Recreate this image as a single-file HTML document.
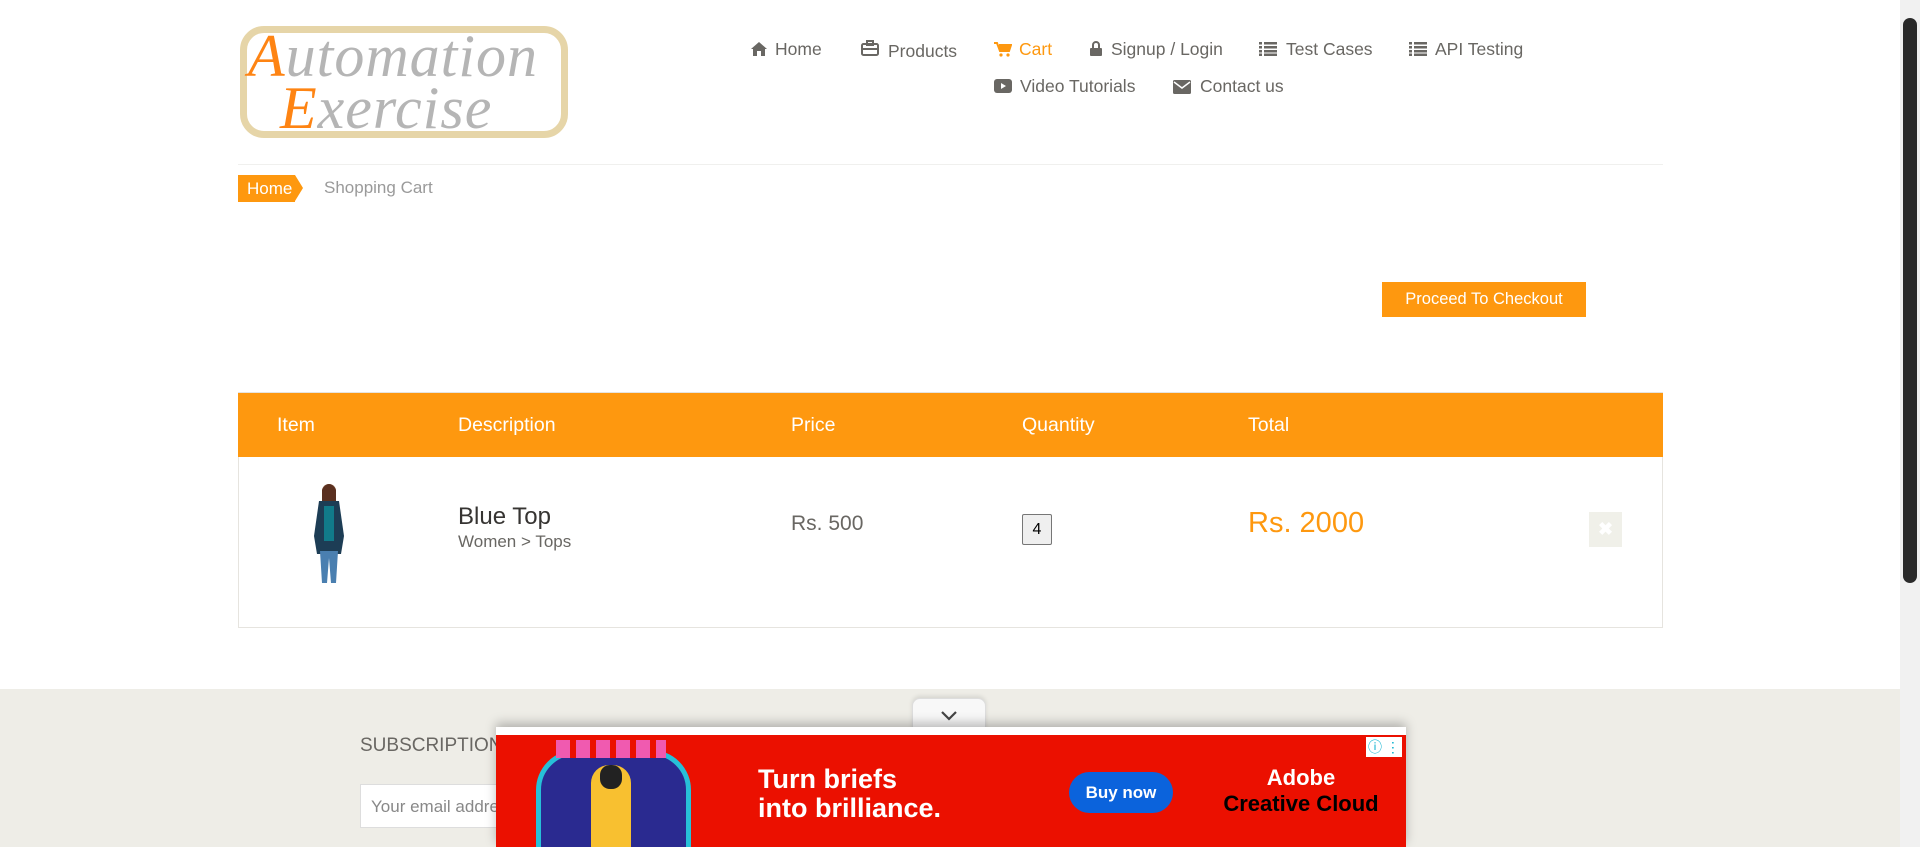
<!DOCTYPE html>
<html><head><meta charset="utf-8"><style>
*{box-sizing:border-box;margin:0;padding:0}
body{width:1920px;height:847px;overflow:hidden;background:#fff;font-family:"Liberation Sans",Arial,sans-serif;position:relative;color:#696763}
.a{position:absolute;white-space:nowrap}
.nav{font-size:17.5px;color:#696763}
.th{color:#fff;font-size:19.5px;top:414px}
</style></head><body>
<!-- logo -->
<div class="a" style="left:240px;top:26px;width:328px;height:112px;border:7px solid #e6d5a8;border-radius:24px"></div>
<div class="a" style="left:248px;top:22px;font-family:'Liberation Serif',serif;font-style:italic;font-size:60px;color:#b5b5b5;letter-spacing:1px"><span style="color:#fe8413">A</span>utomation</div>
<div class="a" style="left:280px;top:74px;font-family:'Liberation Serif',serif;font-style:italic;font-size:60px;color:#b5b5b5;letter-spacing:1px"><span style="color:#fe8413">E</span>xercise</div>
<!-- nav -->
<svg class="a" style="left:751px;top:42px" width="16" height="14" viewBox="0 0 16 14"><path d="M8 0L0 7h2v7h4V9h4v5h4V7h2z" fill="#696763"/></svg>
<div class="a nav" style="left:775px;top:39px">Home</div>
<svg class="a" style="left:861px;top:40px" width="18" height="16" viewBox="0 0 18 16"><rect x="1" y="4" width="16" height="11" rx="1.5" fill="none" stroke="#696763" stroke-width="2"/><rect x="6" y="1" width="6" height="4" fill="none" stroke="#696763" stroke-width="2"/><line x1="1" y1="9" x2="17" y2="9" stroke="#696763" stroke-width="2"/></svg>
<div class="a nav" style="left:888px;top:41px">Products</div>
<svg class="a" style="left:994px;top:42px" width="18" height="15" viewBox="0 0 18 15"><path d="M0 1h3l3 8h9l2-6H5" fill="none" stroke="#fe980f" stroke-width="2"/><rect x="5" y="3" width="11" height="6" fill="#fe980f"/><circle cx="7" cy="13" r="1.6" fill="#fe980f"/><circle cx="14" cy="13" r="1.6" fill="#fe980f"/></svg>
<div class="a nav" style="left:1019px;top:39px;color:#fe980f">Cart</div>
<svg class="a" style="left:1090px;top:41px" width="12" height="15" viewBox="0 0 12 15"><path d="M3 7V4a3 3 0 016 0v3" fill="none" stroke="#696763" stroke-width="2"/><rect x="0" y="7" width="12" height="8" rx="1" fill="#696763"/></svg>
<div class="a nav" style="left:1111px;top:39px">Signup / Login</div>
<svg class="a" style="left:1259px;top:42px" width="18" height="14" viewBox="0 0 18 14"><g fill="#696763"><rect x="0" y="0" width="3" height="2.5"/><rect x="5" y="0" width="13" height="2.5"/><rect x="0" y="4" width="3" height="2.5"/><rect x="5" y="4" width="13" height="2.5"/><rect x="0" y="8" width="3" height="2.5"/><rect x="5" y="8" width="13" height="2.5"/><rect x="0" y="11.5" width="3" height="2.5"/><rect x="5" y="11.5" width="13" height="2.5"/></g></svg>
<div class="a nav" style="left:1286px;top:39px">Test Cases</div>
<svg class="a" style="left:1409px;top:42px" width="18" height="14" viewBox="0 0 18 14"><g fill="#696763"><rect x="0" y="0" width="3" height="2.5"/><rect x="5" y="0" width="13" height="2.5"/><rect x="0" y="4" width="3" height="2.5"/><rect x="5" y="4" width="13" height="2.5"/><rect x="0" y="8" width="3" height="2.5"/><rect x="5" y="8" width="13" height="2.5"/><rect x="0" y="11.5" width="3" height="2.5"/><rect x="5" y="11.5" width="13" height="2.5"/></g></svg>
<div class="a nav" style="left:1435px;top:39px">API Testing</div>
<svg class="a" style="left:994px;top:79px" width="18" height="14" viewBox="0 0 18 14"><rect width="18" height="14" rx="3" fill="#696763"/><path d="M7 4l5 3-5 3z" fill="#fff"/></svg>
<div class="a nav" style="left:1020px;top:76px">Video Tutorials</div>
<svg class="a" style="left:1173px;top:80px" width="18" height="14" viewBox="0 0 18 14"><rect width="18" height="14" rx="1.5" fill="#696763"/><path d="M1 2l8 6 8-6" fill="none" stroke="#fff" stroke-width="1.5"/></svg>
<div class="a nav" style="left:1200px;top:76px">Contact us</div>
<div class="a" style="left:238px;top:164px;width:1425px;height:1px;background:#f0f0ee"></div>
<!-- breadcrumb -->
<div class="a" style="left:238px;top:175px;width:57px;height:27px;background:#fe980f;color:#fff;font-size:17px;line-height:27px;padding-left:9px">Home</div>
<div class="a" style="left:295px;top:175px;width:0;height:0;border-top:13.5px solid transparent;border-bottom:13.5px solid transparent;border-left:8px solid #fe980f"></div>
<div class="a" style="left:324px;top:178px;font-size:17px;color:#9a9a9a">Shopping Cart</div>
<!-- checkout -->
<div class="a" style="left:1382px;top:282px;width:204px;height:35px;background:#fe980f;color:#fff;font-size:16.5px;line-height:35px;text-align:center">Proceed To Checkout</div>
<!-- table -->
<div class="a" style="left:238px;top:392px;width:1425px;height:236px;border:1px solid #e6e4df"></div>
<div class="a" style="left:238px;top:393px;width:1425px;height:64px;background:#fe980f"></div>
<div class="a th" style="left:277px">Item</div>
<div class="a th" style="left:458px">Description</div>
<div class="a th" style="left:791px">Price</div>
<div class="a th" style="left:1022px">Quantity</div>
<div class="a th" style="left:1248px">Total</div>
<svg class="a" style="left:284px;top:481px" width="90" height="102" viewBox="0 0 90 102"><circle cx="45" cy="10" r="7" fill="#7a4a32"/><path d="M38 9q7-12 14 0v14h-14z" fill="#5a3020"/><path d="M35 20h20l5 35-3 18H33l-3-18z" fill="#1d3d55"/><rect x="40" y="25" width="10" height="35" fill="#117b8a"/><path d="M36 70h18l-2 32h-5l-2-25-2 25h-5z" fill="#4a7fb0"/></svg>
<div class="a" style="left:458px;top:503px;font-size:24px;color:#363432">Blue Top</div>
<div class="a" style="left:458px;top:532px;font-size:17px;color:#696763">Women &gt; Tops</div>
<div class="a" style="left:791px;top:512px;font-size:21px;color:#696763">Rs. 500</div>
<div class="a" style="left:1022px;top:514px;width:30px;height:31px;border:1px solid #767676;border-radius:2px;background:#efefef;color:#000;font-size:16px;text-align:center;line-height:29px">4</div>
<div class="a" style="left:1248px;top:507px;font-size:29px;color:#fe980f">Rs. 2000</div>
<div class="a" style="left:1589px;top:512px;width:33px;height:35px;background:#f0f0e9;color:#fff;font-size:18px;font-weight:bold;text-align:center;line-height:35px">✖</div>
<!-- footer -->
<div class="a" style="left:0;top:689px;width:1900px;height:158px;background:#eeede7"></div>
<div class="a" style="left:360px;top:735px;font-size:19px;color:#696763">SUBSCRIPTION</div>
<div class="a" style="left:360px;top:784px;width:300px;height:44px;background:#fff;border:1px solid #ddd;font-size:17px;color:#888;padding:12px 10px">Your email address</div>
<!-- ad -->
<div class="a" style="left:912px;top:698px;width:74px;height:36px;background:#f8f8f8;border:1px solid #ddd;border-radius:8px 8px 0 0;box-shadow:0 -2px 4px rgba(0,0,0,.1);text-align:center"><svg width="20" height="14" viewBox="0 0 20 14" style="margin-top:10px"><path d="M3 3l7 7 7-7" fill="none" stroke="#444" stroke-width="2.2"/></svg></div>
<div class="a" style="left:496px;top:727px;width:910px;height:120px;background:#fff;box-shadow:0 -4px 10px rgba(0,0,0,.25)"></div>
<div class="a" style="left:496px;top:735px;width:910px;height:112px;background:#eb1000;overflow:hidden">
 <div class="a" style="left:40px;top:15px;width:155px;height:112px;background:#2a2a90;border-radius:40px 40px 0 0;border:5px solid #27c0d8"></div>
 <div class="a" style="left:60px;top:5px;width:110px;height:18px;background:repeating-linear-gradient(90deg,#f05ab0 0 14px,#eb1000 14px 20px)"></div>
 <div class="a" style="left:95px;top:30px;width:40px;height:82px;background:#f8c030;border-radius:18px 18px 0 0"></div>
 <div class="a" style="left:104px;top:30px;width:22px;height:24px;background:#222;border-radius:10px"></div>
 <div class="a" style="left:262px;top:30px;color:#fff;font-weight:bold;font-size:27px;line-height:29px">Turn briefs<br>into brilliance.</div>
 <div class="a" style="left:573px;top:37px;width:104px;height:41px;background:#0b63dc;border-radius:21px;color:#fff;font-weight:bold;font-size:17px;text-align:center;line-height:41px">Buy now</div>
 <div class="a" style="left:720px;top:30px;width:170px;text-align:center;color:#fff;font-weight:bold;font-size:22px;line-height:26px">Adobe<br><span style="color:#000">Creative Cloud</span></div>
 <div class="a" style="left:870px;top:2px;width:36px;height:20px;background:#fff;color:#00aecd;font-size:14px;text-align:center;line-height:20px">ⓘ ⋮</div>
</div>
<!-- scrollbar -->
<div class="a" style="left:1900px;top:0;width:20px;height:847px;background:#f1f1f1"></div>
<div class="a" style="left:1903px;top:18px;width:14px;height:565px;background:#2b2b2b;border-radius:7px"></div>
</body></html>
